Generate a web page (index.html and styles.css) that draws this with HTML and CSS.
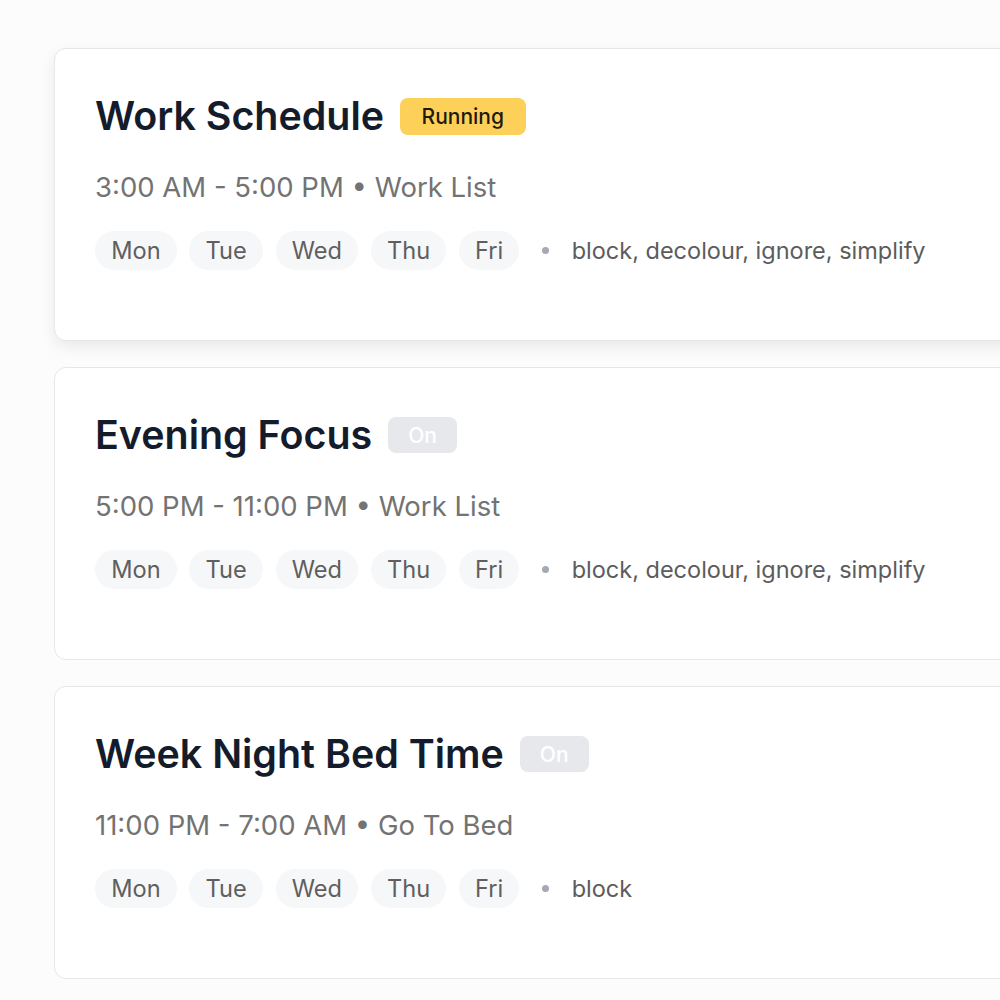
FILE: index.html
```html
<!DOCTYPE html>
<html>
<head>
<meta charset="utf-8">
<link rel="stylesheet" href="styles.css">
</head>
<body>
<div class="list">
  <div class="card active">
    <div class="title-row">
      <h2 class="title">Work Schedule</h2>
      <span class="badge running">Running</span>
    </div>
    <div class="meta">3:00 AM - 5:00 PM • Work List</div>
    <div class="chips">
      <span class="chip">Mon</span><span class="chip">Tue</span><span class="chip">Wed</span><span class="chip">Thu</span><span class="chip">Fri</span>
      <span class="dot"></span>
      <span class="actions">block, decolour, ignore, simplify</span>
    </div>
  </div>
  <div class="card">
    <div class="title-row">
      <h2 class="title">Evening Focus</h2>
      <span class="badge on">On</span>
    </div>
    <div class="meta">5:00 PM - 11:00 PM • Work List</div>
    <div class="chips">
      <span class="chip">Mon</span><span class="chip">Tue</span><span class="chip">Wed</span><span class="chip">Thu</span><span class="chip">Fri</span>
      <span class="dot"></span>
      <span class="actions">block, decolour, ignore, simplify</span>
    </div>
  </div>
  <div class="card">
    <div class="title-row">
      <h2 class="title">Week Night Bed Time</h2>
      <span class="badge on">On</span>
    </div>
    <div class="meta">11:00 PM - 7:00 AM • Go To Bed</div>
    <div class="chips">
      <span class="chip">Mon</span><span class="chip">Tue</span><span class="chip">Wed</span><span class="chip">Thu</span><span class="chip">Fri</span>
      <span class="dot"></span>
      <span class="actions">block</span>
    </div>
  </div>
</div>
</body>
</html>
```
FILE: styles.css
```css
html, body {
  margin: 0;
  padding: 0;
  background: #fcfcfc;
  overflow: hidden;
  font-family: Inter, "Noto Sans", sans-serif;
}
.list {
  display: flex;
  flex-direction: column;
  gap: 26px;
  padding: 48px 0 0 54px;
  width: 1100px;
}
.card {
  background: #ffffff;
  border: 1px solid #e6e7eb;
  border-radius: 12px;
  height: 293px;
  box-sizing: border-box;
  padding: 40px 40px 0 40px;
}
.card.active {
  box-shadow: 0 6px 16px rgba(0, 0, 0, 0.08);
}
.title-row {
  display: flex;
  align-items: center;
  gap: 16px;
  height: 54px;
}
.title {
  margin: 0;
  font-size: 39.4px;
  font-weight: 600;
  color: #141c2b;
  line-height: 54px;
}
.badge {
  display: inline-flex;
  align-items: center;
  justify-content: center;
  height: 37px;
  padding: 0 21.5px;
  border-radius: 8px;
  font-size: 21px;
  font-weight: 500;
}
.badge.running {
  background: #fdd05a;
  color: #1f1a0e;
}
.badge.on {
  background: #e7e8ec;
  color: #ffffff;
  padding: 0 20px;
  height: 36px;
}
.meta {
  margin-top: 28px;
  font-size: 27.5px;
  color: #737373;
  line-height: 32px;
}
.chips {
  margin-top: 28px;
  display: flex;
  align-items: center;
  gap: 12.6px;
}
.chip {
  background: #f6f7f9;
  border-radius: 20px;
  height: 39px;
  padding: 0 16.2px;
  display: inline-flex;
  align-items: center;
  font-size: 23.6px;
  color: #5f5f5f;
}
.dot {
  width: 7px;
  height: 7px;
  border-radius: 50%;
  background: #a4a9b3;
  margin: 0 10px;
}
.actions {
  font-size: 23.5px;
  color: #5c5c5c;
}
```
